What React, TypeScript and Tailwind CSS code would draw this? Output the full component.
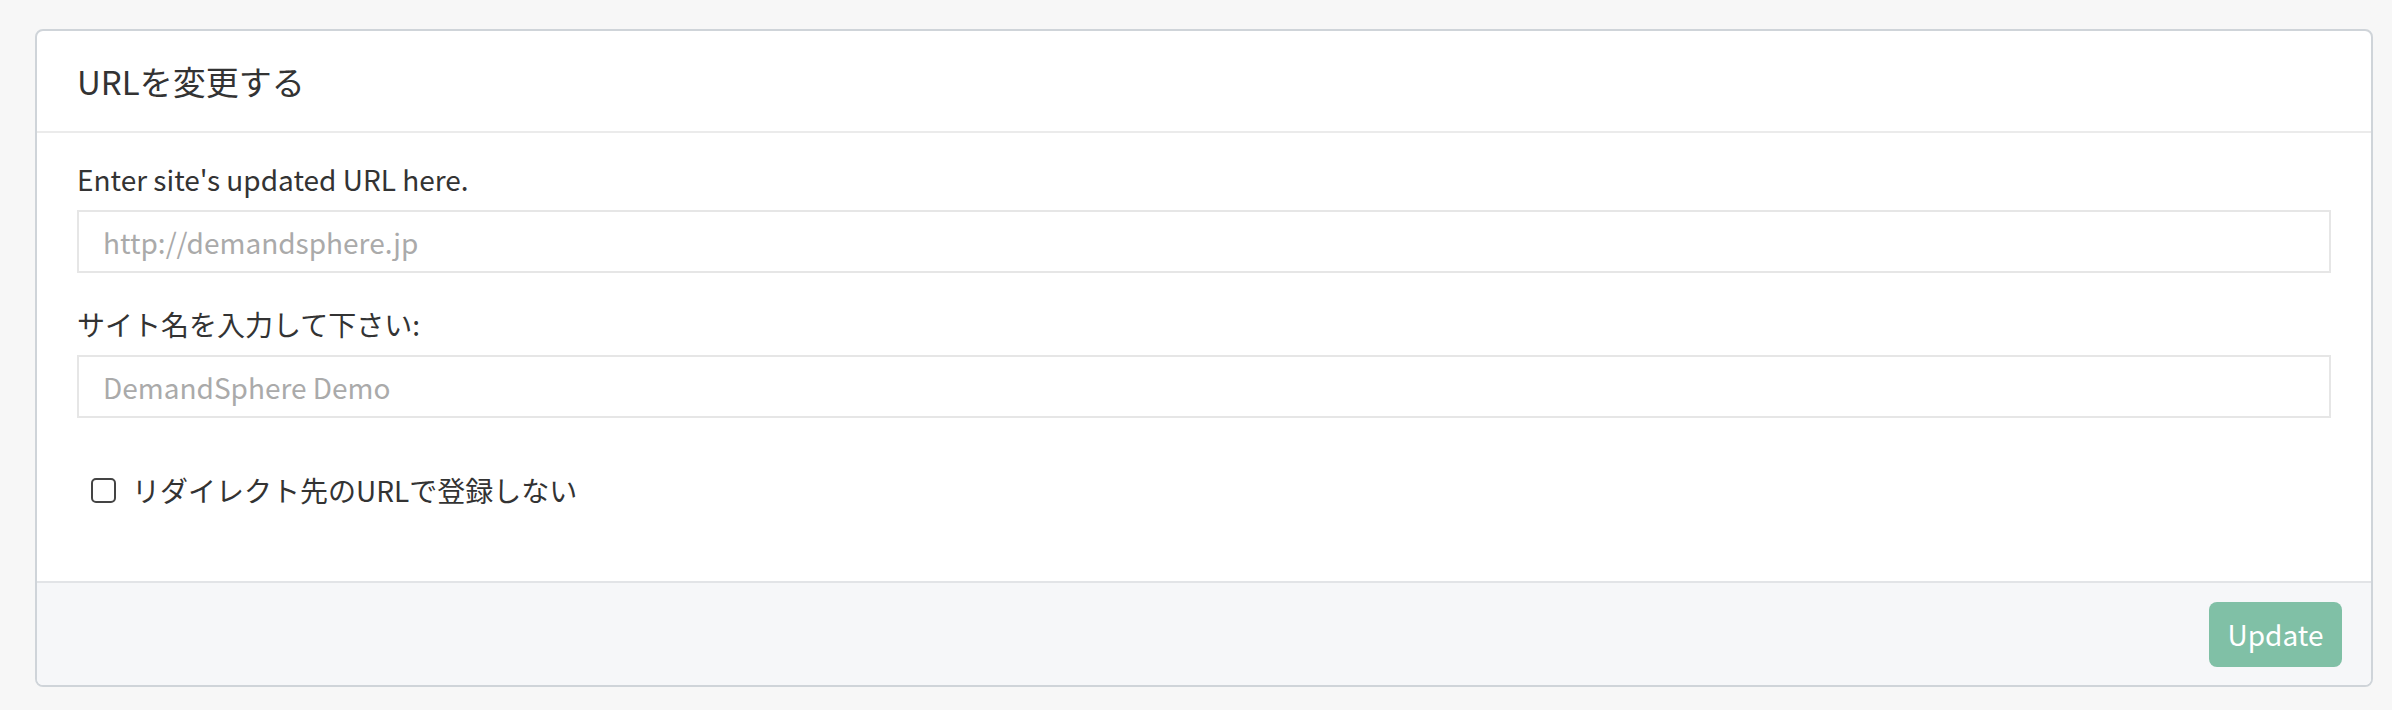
const font = { fontFamily: '"Noto Sans CJK JP", "Noto Sans", sans-serif' };

function Field({ label, placeholder }: { label: string; placeholder: string }) {
  return (
    <div className="mb-[30px]">
      <label className="block text-[28px] leading-[42px] text-[#333] mb-[10px]">{label}</label>
      <input
        type="text"
        placeholder={placeholder}
        className="block w-full h-[63px] border-2 border-[#e6e6e6] bg-white px-[24px] text-[28px] text-[#333] placeholder:text-[#aaaaaa] outline-none"
        style={font}
      />
    </div>
  );
}

export default function App() {
  return (
    <div className="min-h-screen bg-[#f7f7f7] pt-[29px] pb-[22px] pl-[35px] pr-[19px]" style={font}>
      <div className="bg-white border-2 border-[#cfd4d9] rounded-[8px] overflow-hidden">
        {/* header */}
        <div className="h-[102px] flex items-center px-[40px] border-b-2 border-[#ebebeb]">
          <h2 className="text-[33px] text-[#333] leading-none">URLを変更する</h2>
        </div>

        {/* body */}
        <div className="px-[40px] pt-[25px] h-[448px]">
          <Field label="Enter site's updated URL here." placeholder="http://demandsphere.jp" />
          <Field label="サイト名を入力して下さい:" placeholder="DemandSphere Demo" />
          <label className="flex items-center h-[42px] mt-[51px] pl-[14px] gap-[16px] text-[28px] text-[#333]">
            <input
              type="checkbox"
              className="appearance-none w-[25px] h-[25px] border-2 border-[#444] rounded-[5px] bg-white shrink-0"
            />
            <span>リダイレクト先のURLで登録しない</span>
          </label>
        </div>

        {/* footer */}
        <div className="border-t-2 border-[#e2e4e7] bg-[#f6f7f9] h-[104px] flex items-center justify-end pr-[29px]">
          <button className="h-[65px] w-[133px] rounded-[8px] bg-[#80c0a6] text-white text-[28px]">
            Update
          </button>
        </div>
      </div>
    </div>
  );
}
